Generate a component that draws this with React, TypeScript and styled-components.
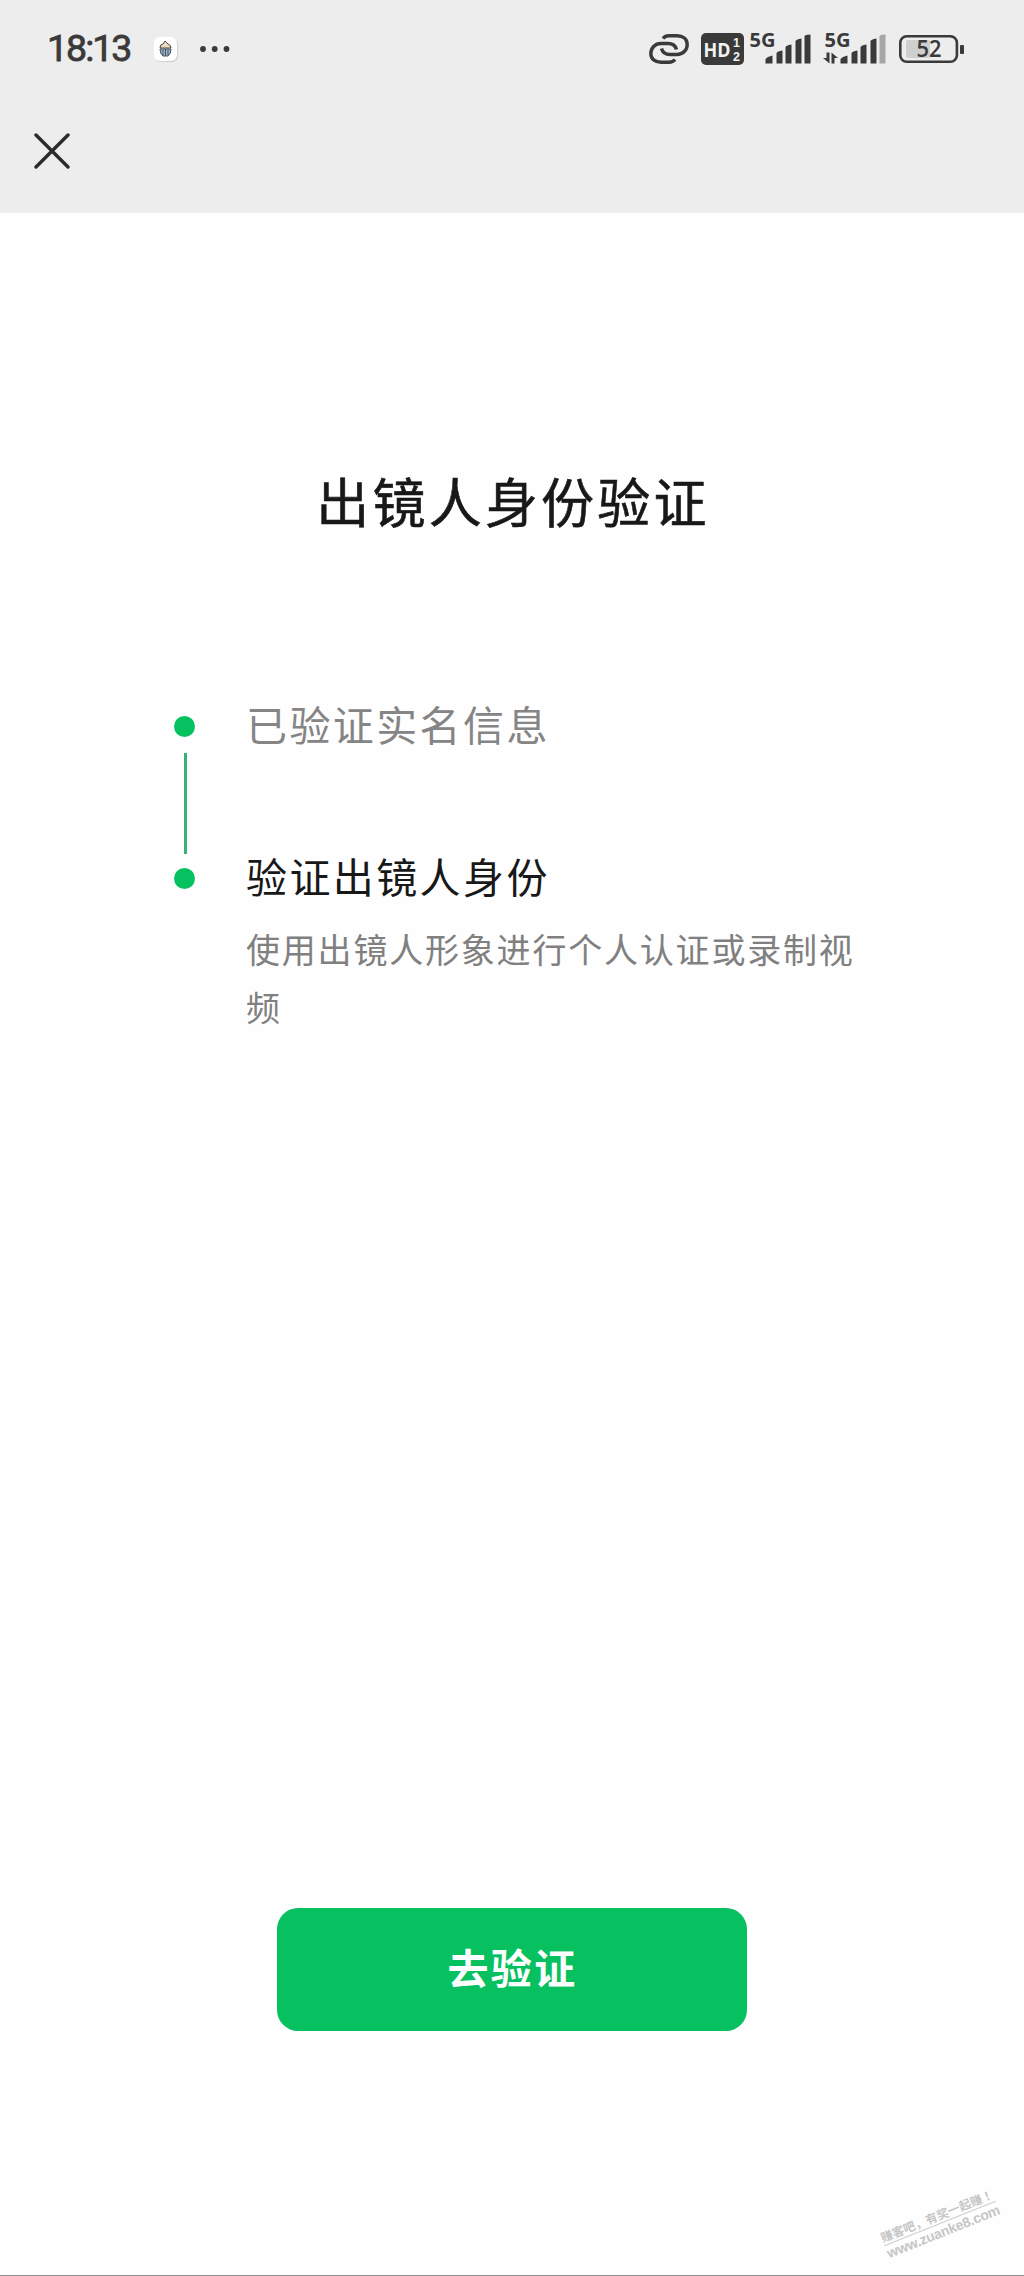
import React from 'react';
import styled, { createGlobalStyle } from 'styled-components';

const cjk = '"Noto Sans CJK SC", "Noto Sans", sans-serif';
const ink = '#3a3a3a';
const green = '#07c160';

const GlobalStyle = createGlobalStyle`
  * { box-sizing: border-box; }
  body { margin: 0; background: #fff; font-family: ${cjk}; }
`;

const Screen = styled.div`
  position: relative;
  display: flex;
  flex-direction: column;
  width: 1024px;
  height: 2276px;
  background: #fefefe;
  border-bottom: 1px solid #8f8f8f;
  overflow: hidden;
`;

const Header = styled.header`
  display: flex;
  flex-direction: column;
  height: 213px;
  background: #ededed;
`;

const StatusBar = styled.div`
  display: flex;
  justify-content: space-between;
  height: 97px;
  padding: 0 60px 0 47px;
`;

const StatusGroup = styled.div`
  display: flex;
  align-items: center;
  height: 97px;
`;

const Clock = styled.span`
  width: 107px;
  font: 400 37.5px/97px Roboto, sans-serif;
  letter-spacing: -2px;
  -webkit-text-stroke: 0.8px ${ink};
  color: ${ink};
  white-space: nowrap;
`;

const AppBadge = styled.span`
  display: flex;
  align-items: center;
  justify-content: center;
  width: 23px;
  height: 24px;
  margin-right: 23px;
  border-radius: 6px;
  background: #fff;
  box-shadow: 1px 1px 1px #d4cec8;
`;

const StatusIcon = styled.svg<{ $gap?: number }>`
  flex: none;
  display: block;
  margin-left: ${p => p.$gap ?? 0}px;
  overflow: visible;
`;

const CloseButton = styled.button`
  display: flex;
  align-items: center;
  justify-content: center;
  width: 48px;
  height: 48px;
  margin: 30px 0 0 28px;
  padding: 0;
  border: 0;
  background: none;
`;

const Content = styled.main`
  display: flex;
  flex-direction: column;
  flex: 1;
`;

const Title = styled.h1`
  margin: 247px 0 0 2px;
  font-size: 53px;
  line-height: 80px;
  font-weight: 400;
  -webkit-text-stroke: 0.6px #181818;
  letter-spacing: 3.2px;
  text-align: center;
  color: #181818;
`;

const Steps = styled.ol`
  display: flex;
  flex-direction: column;
  margin: 155px 0 0 174px;
  padding: 0;
  list-style: none;
`;

const Step = styled.li`
  display: flex;
`;

const Rail = styled.div`
  display: flex;
  flex-direction: column;
  align-items: center;
  width: 21px;
  margin-right: 51px;
  padding-top: 21px;
`;

const Dot = styled.span`
  width: 21px;
  height: 21px;
  border-radius: 50%;
  background: ${green};
`;

const Connector = styled.span`
  width: 3px;
  height: 101px;
  margin: 16px 0 -10px 2px;
  background: #36b275;
`;

const StepBody = styled.div<{ $height?: number }>`
  width: 620px;
  height: ${p => (p.$height ? `${p.$height}px` : 'auto')};
`;

const StepTitle = styled.h2<{ $done?: boolean }>`
  margin: 0;
  font-size: 41px;
  line-height: 56px;
  font-weight: 400;
  letter-spacing: 2.4px;
  color: ${p => (p.$done ? '#858585' : '#181818')};
`;

const StepNote = styled.p`
  margin: 17px 0 0;
  font-size: 34px;
  line-height: 58px;
  font-weight: 400;
  letter-spacing: 1.8px;
  color: #808080;
`;

const ActionButton = styled.button`
  align-self: center;
  width: 470px;
  height: 123px;
  margin: auto 0 244px;
  padding: 0 0 6px 1px;
  border: 0;
  border-radius: 21px;
  background: ${green};
  color: #fff;
  font: 700 41px/117px ${cjk};
  letter-spacing: 2.4px;
`;

const Watermark = styled.div`
  position: absolute;
  left: 880px;
  top: 2206px;
  width: 120px;
  transform: rotate(-21.8deg);
  color: #c6c6c6;
  white-space: nowrap;
`;

const WatermarkSlogan = styled.div`
  border-bottom: 1px solid #cccccc;
  font: 700 12px/17px ${cjk};
`;

const CenteredMark = styled.span`
  font-family: "Noto Sans CJK TC", sans-serif;
`;

const WatermarkUrl = styled.div`
  font: 700 14px/17px "Liberation Sans", sans-serif;
  letter-spacing: -0.25px;
`;

const signalBars = [
  'M0 29v-4q0-2 7-4v8z',
  'M11 29V19q0-2 6-3v13z',
  'M20 29V13q0-2 6-3v19z',
  'M30 29V7q0-2 6-3v25z',
  'M39 29V2q0-2 6-2v29z',
];

function Signal({ weak = false, gap = 0 }: { weak?: boolean; gap?: number }) {
  return (
    <StatusIcon $gap={gap} width="61" height="33" viewBox="0 0 61 33" fill={ink}>
      <text x="-0.5" y="15.3" fontFamily="Open Sans" fontWeight="700" fontSize="19.5" textLength="26" lengthAdjust="spacingAndGlyphs">5G</text>
      <g transform="translate(15.5 2.5)">
        {signalBars.map((d, i) => (
          <path key={i} d={d} fill={weak && i === 4 ? '#a6a6a6' : ink} />
        ))}
      </g>
      {weak && (
        <path d="M4.5 20.5v11L-2 26h3.5v-5.5zM6.5 31.5v-11L13 26H9.5v5.5z" />
      )}
    </StatusIcon>
  );
}

export default function App() {
  return (
    <>
      <GlobalStyle />
      <Screen>
        <Header>
          <StatusBar>
            <StatusGroup>
              <Clock>18:13</Clock>
              <AppBadge>
                <svg width="13" height="17" viewBox="0 0 13 17">
                  <path d="M1 8Q1 4 4 4L6 1l3 3q3 1 3 4z" fill="#eadbc0" stroke="#4e4941" />
                  <path d="M1 9h11q0 5-3 7H4Q1 14 1 9z" fill="#9db5cd" stroke="#46525f" />
                  <path d="M4 10v5M6.5 9v7M9 10v5" stroke="#46525f" />
                </svg>
              </AppBadge>
              <svg width="30" height="8" viewBox="0 0 30 8" fill={ink}>
                <circle cx="3" cy="4" r="2.9" />
                <circle cx="14.7" cy="4" r="2.9" />
                <circle cx="26.5" cy="4" r="2.9" />
              </svg>
            </StatusGroup>
            <StatusGroup>
              <StatusIcon width="40" height="30" viewBox="0 0 40 30" fill="none" stroke={ink} strokeWidth="3.4">
                <path d="M14 4.5Q16 1.8 20 1.8H28C34 1.8 38.2 5 38.2 10.5S34 20.5 28 20.5H21Q14 20.5 12.5 14.5" />
                <path d="M26 25.5Q24 28.2 20 28.2H12C6 28.2 1.8 25 1.8 19.5S6 9.5 12 9.5H19Q26 9.5 27.5 15.5" />
              </StatusIcon>
              <StatusIcon $gap={12} width="43" height="32" viewBox="0 0 43 32">
                <rect width="43" height="32" rx="5" fill={ink} />
                <g fill="#f2f2f2" fontWeight="700">
                  <text x="2.5" y="23.5" fontFamily="Open Sans" fontSize="20" textLength="27" lengthAdjust="spacingAndGlyphs">HD</text>
                  <text x="32" y="13.8" fontFamily="Liberation Sans" fontSize="12.5">1</text>
                  <text x="32" y="28.3" fontFamily="Liberation Sans" fontSize="12.5">2</text>
                </g>
              </StatusIcon>
              <Signal gap={6} />
              <Signal weak gap={13.5} />
              <StatusIcon $gap={13.5} width="65" height="28" viewBox="0 0 65 28">
                <rect x="7" y="5" width="24" height="18" rx="2" fill="#cfcfcf" />
                <rect x="1.3" y="1.3" width="56.6" height="25.4" rx="6.5" fill="none" stroke={ink} strokeWidth="2.6" />
                <rect x="61" y="10" width="4" height="9" rx="1" fill={ink} />
                <text x="17.5" y="22.3" fill={ink} fontFamily="Open Sans" fontWeight="600" fontSize="22.5" textLength="25" lengthAdjust="spacingAndGlyphs">52</text>
              </StatusIcon>
            </StatusGroup>
          </StatusBar>
          <CloseButton aria-label="关闭">
            <svg width="36" height="36" viewBox="0 0 36 36" stroke="#2b2b2b" strokeWidth="3.4" strokeLinecap="round">
              <path d="M2 2l32 32M34 2L2 34" />
            </svg>
          </CloseButton>
        </Header>
        <Content>
          <Title>出镜人身份验证</Title>
          <Steps>
            <Step>
              <Rail>
                <Dot />
                <Connector />
              </Rail>
              <StepBody $height={152}>
                <StepTitle $done>已验证实名信息</StepTitle>
              </StepBody>
            </Step>
            <Step>
              <Rail>
                <Dot />
              </Rail>
              <StepBody>
                <StepTitle>验证出镜人身份</StepTitle>
                <StepNote>使用出镜人形象进行个人认证或录制视频</StepNote>
              </StepBody>
            </Step>
          </Steps>
          <ActionButton>去验证</ActionButton>
        </Content>
        <Watermark>
          <WatermarkSlogan>赚客吧，有奖一起赚<CenteredMark>！</CenteredMark></WatermarkSlogan>
          <WatermarkUrl>www.zuanke8.com</WatermarkUrl>
        </Watermark>
      </Screen>
    </>
  );
}
